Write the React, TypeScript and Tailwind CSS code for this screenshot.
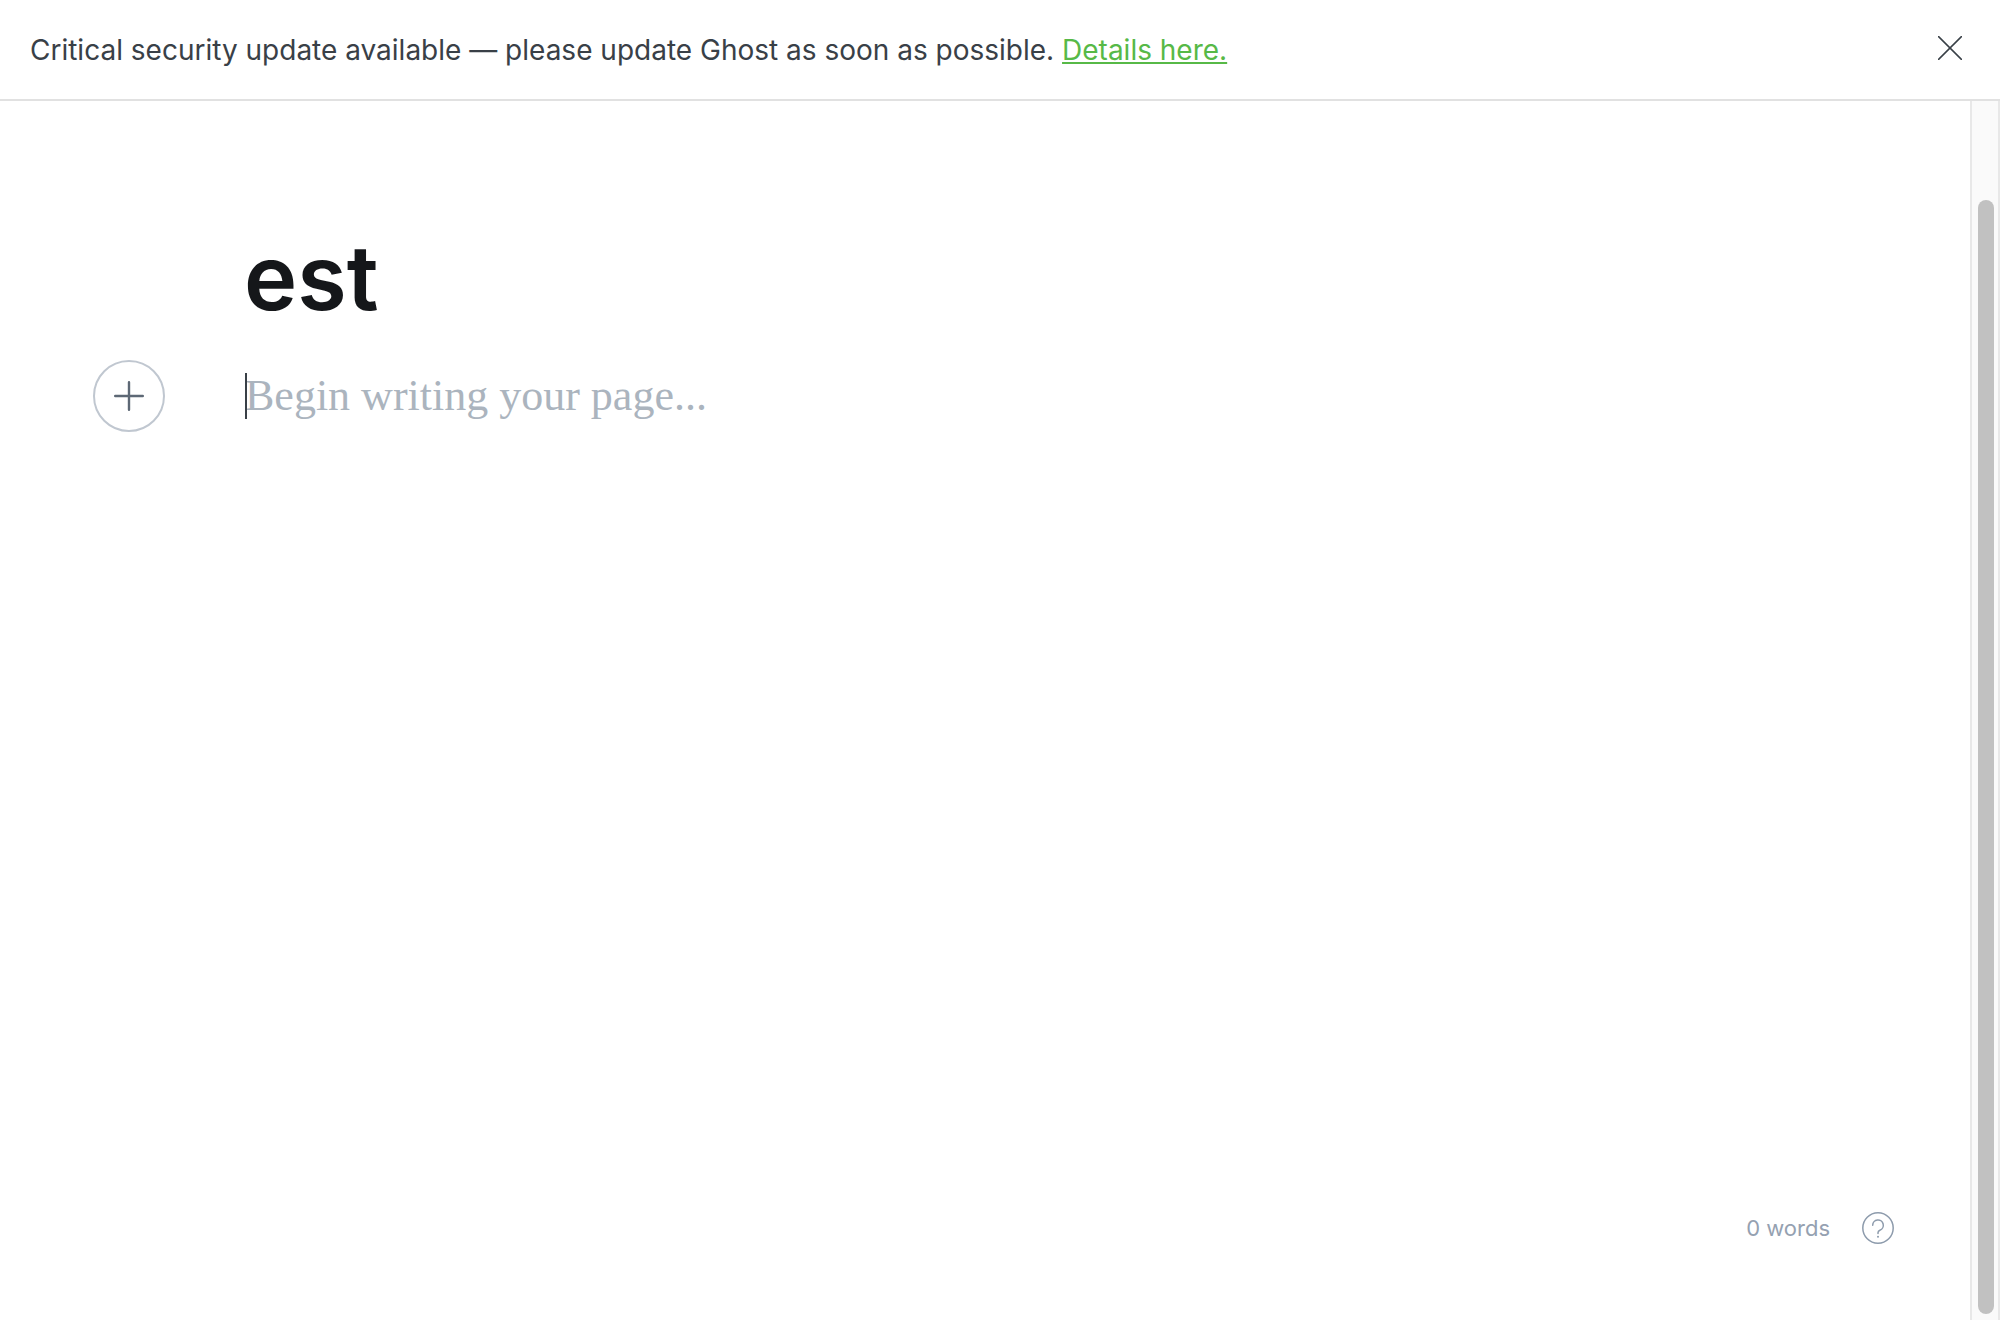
function CloseIcon() {
  return (
    <svg width="24" height="24" viewBox="0 0 24 24" fill="none" stroke="#394047" strokeWidth="1.5" strokeLinecap="round" aria-hidden="true">
      <path d="M0.6 0.6 23.4 23.4M23.4 0.6 0.6 23.4" />
    </svg>
  );
}

function PlusIcon() {
  return (
    <svg width="30" height="30" viewBox="0 0 30 30" fill="none" stroke="#5d6875" strokeWidth="2.4" strokeLinecap="round" aria-hidden="true">
      <path d="M15 1.200v27.600M1.200 15h27.600" />
    </svg>
  );
}

function HelpIcon() {
  return (
    <svg width="32" height="32" viewBox="0 0 32 32" fill="none" stroke="#8d9bac" strokeWidth="1.5" strokeLinecap="round" strokeLinejoin="round" aria-hidden="true">
      <circle cx="16" cy="16" r="15.2" />
      <path d="M10.7 13.2a5.3 5.3 0 1 1 7.2 5c-1.2.5-1.900 1.300-1.900 2.500v.8" />
      <circle cx="16" cy="24.800" r="1" fill="#8d9bac" stroke="none" />
    </svg>
  );
}

function UpdateBanner() {
  return (
    <header className="flex items-start justify-between border-b-2 border-[#e1e1e1] pr-9 pl-[30px]">
      <p className="pt-[29px] pb-7 text-[28px] leading-[42px] text-[#394047]">
        Critical security update available — please update Ghost as soon as possible.{" "}
        <a href="#details" className="text-[#57b947] underline decoration-2 underline-offset-2">
          Details here.
        </a>
      </p>
      <button type="button" aria-label="Close" className="mt-[34px] grid size-7 place-items-center">
        <CloseIcon />
      </button>
    </header>
  );
}

function Editor() {
  return (
    <main className="flex min-w-0 flex-1 flex-col">
      <div className="pt-[122px] pr-[93px] pl-[244px]">
        <input
          type="text"
          aria-label="Page title"
          defaultValue="est"
          className="block h-[110px] w-full text-[90px] leading-[110px] font-semibold text-[#15171a] outline-none"
        />
      </div>
      <div className="flex items-center gap-20 pt-[27px] pr-[93px] pl-[93px]">
        <button
          type="button"
          aria-label="Add a card"
          className="grid size-[72px] shrink-0 place-items-center rounded-full border-2 border-[#c0c7d0]"
        >
          <PlusIcon />
        </button>
        <div className="relative flex-1">
          <textarea
            rows={1}
            aria-label="Page content"
            placeholder="Begin writing your page..."
            className="block h-[56px] w-full resize-none overflow-hidden font-['Liberation_Serif',serif] text-[44px] leading-[56px] text-[#15171a] outline-none placeholder:text-[#abb4be]"
          />
          <span className="absolute top-[5px] left-0 h-[46px] w-0.5 bg-[#394047]" />
        </div>
      </div>
      <footer className="mt-auto flex items-center justify-end gap-8 pr-[76px] pb-[76px] text-[22px] leading-8 text-[#95a1b1]">
        <span>0 words</span>
        <button type="button" aria-label="Help">
          <HelpIcon />
        </button>
      </footer>
    </main>
  );
}

export default function App() {
  return (
    <div className="flex h-screen flex-col bg-white font-['Inter',sans-serif]">
      <UpdateBanner />
      <div className="flex min-h-0 flex-1">
        <Editor />
        <div className="flex w-[30px] shrink-0 flex-col border-x-2 border-x-[#e8e8e8] bg-[#fafafa] px-1.5 pt-[99px] pb-1.5" aria-hidden="true">
          <div className="w-4 flex-1 rounded-full bg-[#c1c1c1]" />
        </div>
      </div>
    </div>
  );
}
